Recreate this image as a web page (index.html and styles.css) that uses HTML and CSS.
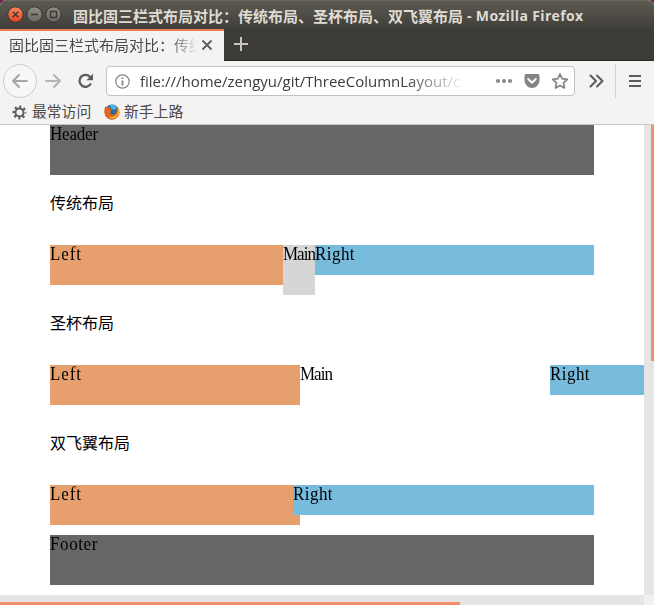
FILE: index.html
```html
<!DOCTYPE html>
<html lang="zh-CN">
<head>
<meta charset="utf-8">
<title>固比固三栏式布局对比</title>
<link rel="stylesheet" href="styles.css">
</head>
<body>
<div class="window">
  <header class="titlebar">
    <svg class="controls" width="64" height="29" viewBox="0 0 64 29">
      <defs>
        <linearGradient id="close" x1="0" y1="0" x2="0" y2="1"><stop offset="0" stop-color="#f68763"/><stop offset="1" stop-color="#e4481c"/></linearGradient>
        <linearGradient id="grey" x1="0" y1="0" x2="0" y2="1"><stop offset="0" stop-color="#918f87"/><stop offset="1" stop-color="#68665f"/></linearGradient>
      </defs>
      <g stroke="#34332f">
        <circle cx="15.500" cy="14.500" r="7.700" fill="url(#close)"/>
        <circle cx="34.500" cy="14.500" r="7.700" fill="url(#grey)"/>
        <circle cx="53.500" cy="14.500" r="7.700" fill="url(#grey)"/>
      </g>
      <g fill="none" stroke="#393731" stroke-width="1.300">
        <path d="M12.700 11.700l5.600 5.600M18.300 11.700l-5.600 5.600"/>
        <path d="M31 14.500h7M50.500 11.500h6v6h-6z"/>
      </g>
    </svg>
    <span class="title"><span class="title-cjk">固比固三栏式布局对比：传统布局、圣杯布局、双飞翼布局</span><span class="title-app">- Mozilla Firefox</span></span>
  </header>
  <div class="tabs">
    <div class="tab">
      <span class="tab-label">固比固三栏式布局对比：传统</span>
      <svg class="tab-close" width="12" height="12" viewBox="0 0 12 12"><path d="M1.500 1.500l9 9M10.500 1.500l-9 9" stroke="#5c5c5c" stroke-width="1.800" fill="none"/></svg>
    </div>
    <svg class="new-tab" width="16" height="16" viewBox="0 0 16 16"><path d="M1 7h14M8 0v14" stroke="#c9c6c1" stroke-width="2"/></svg>
  </div>
  <nav class="toolbar">
    <svg width="105" height="41" viewBox="0 0 105 41" fill="none" stroke-width="2" stroke-linecap="round" stroke-linejoin="round">
      <circle cx="20" cy="20" r="16.500" fill="#f8f7f6" stroke="#cfcdca" stroke-width="1"/>
      <path d="M13 20h14M19 14l-6 6 6 6" stroke="#a7a6a4"/>
      <path d="M46 20h14M54 14l6 6-6 6" stroke="#b5b4b2"/>
      <path d="M90.300 16.200a6 6 0 1 0 .6 6.300" stroke="#5b5b5b" stroke-width="2.300" stroke-linecap="butt"/>
      <path d="M93 12.800v6.400h-6.500z" fill="#5b5b5b"/>
    </svg>
    <div class="urlbar">
      <svg class="info" width="15" height="15" viewBox="0 0 15 15"><circle cx="7.500" cy="7.500" r="6.700" fill="none" stroke="#858585" stroke-width="1.200"/><path d="M7.500 6.500v5M7.500 3.500v1.600" stroke="#858585" stroke-width="1.800"/></svg>
      <span class="url">file:///home/zengyu/git/ThreeColumnLayout/c</span>
      <svg class="actions" width="76" height="20" viewBox="0 0 76 20">
        <g fill="#858585"><circle cx="4" cy="10" r="2"/><circle cx="10" cy="10" r="2"/><circle cx="16" cy="10" r="2"/>
        <path d="M32 3h12q1.500 0 1.500 1.500V9.500a7.500 7.500 0 0 1-15 0V4.500Q30.500 3 32 3z"/></g>
        <path d="M34.200 8l3.800 3.700L41.800 8" fill="none" stroke="#fff" stroke-width="1.900" stroke-linecap="round" stroke-linejoin="round"/>
        <path d="M66 3l2.100 4.700 5.200.6-3.800 3.500 1 5.200-4.500-2.600-4.500 2.600 1-5.200-3.800-3.500 5.200-.6z" fill="none" stroke="#858585" stroke-width="1.700" stroke-linejoin="round"/>
      </svg>
    </div>
    <svg width="79" height="41" viewBox="0 0 79 41" fill="none" stroke="#5b5b5b" stroke-width="2">
      <path d="M15.500 14.500l5.500 5.500-5.500 5.500M22 14.500l5.500 5.500-5.500 5.500" stroke-linecap="round" stroke-linejoin="round"/>
      <path d="M40.500 3v34" stroke="#d5d3d0" stroke-width="1"/>
      <path d="M54 15h12M54 20h12M54 25h12"/>
    </svg>
  </nav>
  <div class="bookmarks">
    <svg class="gear" width="15" height="15" viewBox="0 0 15 15"><circle cx="7.500" cy="7.500" r="5.800" fill="none" stroke="#5b5b5b" stroke-width="2.400" stroke-dasharray="2.050 2.505" stroke-dashoffset="1.020"/><circle cx="7.500" cy="7.500" r="4" fill="none" stroke="#5b5b5b" stroke-width="1.900"/></svg>
    <span class="bookmark">最常访问</span>
    <svg class="fox" width="16" height="16" viewBox="0 0 16 16">
      <circle cx="8" cy="8" r="7.400" fill="#286ba7"/><path d="M6 1.200c3-1.200 6 .2 7 2.300L10 6 7 4z" fill="#4fb6df"/>
      <path d="M1.500 2c.6 1 1.400 1.500 2.800 1.500 1.200-.8 2-.8 2-.8-.8 1-.5 2 .2 2.500l1.500.5L6.500 7.500C5.800 10.500 8.500 11.500 11 10c2-1.300 2-4 1.400-5.700L14 3.500c2.300 3.700 1.700 8-1.500 10.500C8.500 17 2.500 15.500 1 11 0 8 .2 4.500 1.500 2z" fill="#e8641b"/>
      <path d="M14 3.500c1.700 3.200 1.500 7-1.500 9.500-2.500 2-6 1.800-8 0 4 1 8-.5 9-3.500.6-2 .6-4 .5-6z" fill="#ffc52d"/>
    </svg>
    <span class="bookmark">新手上路</span>
  </div>
  <div class="viewport">
    <main class="page">
      <div class="band"><span class="label label-header">Header</span></div>
      <p class="caption">传统布局</p>
      <section class="row">
        <div class="left narrow"><span class="label label-left">Left</span></div>
        <div class="main filled"><span class="label label-main">Main</span></div>
        <div class="right"><span class="label label-right">Right</span></div>
      </section>
      <p class="caption">圣杯布局</p>
      <section class="row">
        <div class="left"><span class="label label-left">Left</span></div>
        <div class="main wide"><span class="label label-main">Main</span></div>
        <div class="right spill"><span class="label label-right">Right</span></div>
      </section>
      <p class="caption">双飞翼布局</p>
      <section class="row">
        <div class="left"><span class="label label-left">Left</span></div>
        <div class="right overlap"><span class="label label-right">Right</span></div>
      </section>
      <div class="band"><span class="label label-footer">Footer</span></div>
    </main>
    <div class="vscroll"><div class="vthumb"></div></div>
    <div class="hscroll"><div class="hthumb"></div></div>
    <div class="corner"></div>
  </div>
</div>
</body>
</html>
```
FILE: styles.css
```css
* { box-sizing: border-box; }
body { margin: 0; background: #6b1b4b; overflow: hidden; }
svg { display: block; flex: none; }
.window {
  width: 654px; height: 605px; overflow: hidden;
  display: flex; flex-direction: column;
  border-radius: 6px 6px 0 0;
  background: #f4f3f1;
  font: 15px/20px "Open Sans", "Noto Sans CJK SC", sans-serif;
  color: #4a4a4a; white-space: nowrap;
}
.titlebar {
  flex: none; height: 29px; display: flex; align-items: center;
  background: linear-gradient(#5d5a52, #403e39);
  border-top: 1px solid #6b685f;
}
.controls { margin-top: -1px; }
.title { display: flex; padding-left: 9px; padding-top: 1px; color: #dfdbd2; font-weight: 700; }
.title-cjk { width: 394px; font-family: "Noto Sans CJK SC", sans-serif; }
.title-app { font-size: 14px; letter-spacing: .35px; }
.tabs { flex: none; height: 32px; display: flex; background: #3c3b37; border-bottom: 1px solid #2b2a27; }
.tab {
  width: 224px; height: 32px; display: flex; align-items: center;
  padding: 0 11px 0 9px; background: #f4f3f1; border-top: 2px solid #f0784f;
}
.tab-label {
  width: 188px; overflow: hidden; margin: -2px 4px 0 0; font-family: "Noto Sans CJK SC", sans-serif;
  mask-image: linear-gradient(to right, #000 160px, transparent 188px);
}
.tab-close { margin-top: -2px; }
.new-tab { margin: 8px 0 0 9px; }
.toolbar { flex: none; height: 41px; display: flex; align-items: center; }
.urlbar {
  width: 470px; height: 30px; margin-left: 1px; margin-top: -1px;
  display: flex; align-items: center;
  background: #fff; border: 1px solid #c5c2be; border-radius: 4px;
}
.info { margin-left: 8px; }
.url {
  width: 321px; margin-left: 10px; overflow: hidden; color: #3c3c3c;
  mask-image: linear-gradient(to right, #000 265px, transparent 325px);
}
.actions { margin-left: 33px; }
.bookmarks { flex: none; height: 23px; display: flex; align-items: center; border-bottom: 1px solid #c9c6c2; }
.gear { margin: -2px 5px 0 12px; }
.bookmark { font-size: 14.8px; width: 60px; font-family: "Noto Sans CJK SC", sans-serif; margin-top: -4px; }
.fox { margin: -2px 4px 0 12px; }
.viewport {
  flex: none; height: 480px; display: grid;
  grid-template: 470px 10px / 644px 10px;
  color: #000; font: 16px/20px "Noto Sans CJK SC", sans-serif;
}
.page { padding: 0 50px; background: #fff; overflow: hidden; }
.label {
  display: block; width: max-content;
  font: 17px/20px "Liberation Serif", serif;
  transform: scaleY(1.07);
}
.label-header { letter-spacing: -.2px; }
.label-left { letter-spacing: .9px; }
.label-main { letter-spacing: -1px; }
.label-right { letter-spacing: .45px; }
.label-footer { letter-spacing: .6px; }
.band { height: 50px; background: #666; }
.caption { margin: 0; height: 70px; padding-top: 17px; }
.row { display: flex; align-items: flex-start; height: 50px; }
.left { flex: none; width: 250px; height: 40px; background: #e79f6d; }
.narrow { width: 233px; }
.main { flex: none; width: 32px; height: 50px; }
.filled { background: #d6d6d6; }
.wide { width: 249px; }
.right { flex: 1 0 0; height: 30px; background: #77bbdd; }
.spill { flex: 0 0 300px; margin-left: 1px; }
.overlap { margin-left: -7px; }
.vscroll { background: #e5e5e5; display: flex; justify-content: flex-end; }
.vthumb { width: 3px; height: 236px; background: #f08f68; }
.hscroll { background: #e5e5e5; display: flex; align-items: flex-end; }
.hthumb { width: 460px; height: 3px; background: #f08f68; }
.corner { background: #f2f1f0; }
```
